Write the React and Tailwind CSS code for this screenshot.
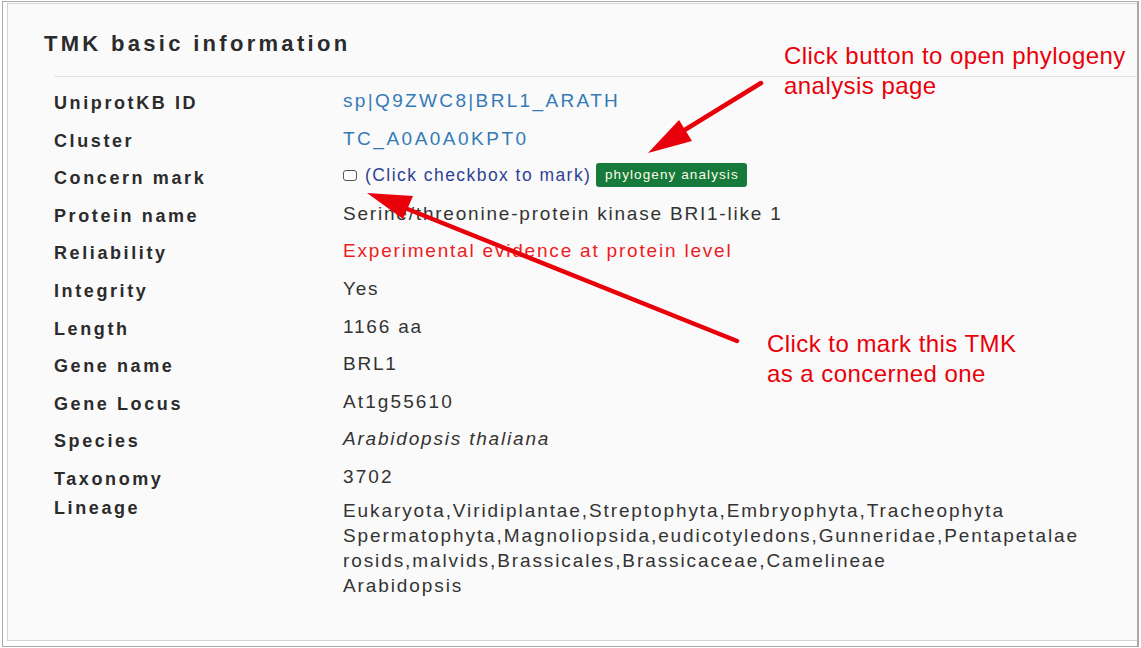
import React from "react";

const rows = [
  ["UniprotKB ID", "link", "sp|Q9ZWC8|BRL1_ARATH"],
  ["Cluster", "link2", "TC_A0A0A0KPT0"],
  ["Concern mark", "mark", ""],
  ["Protein name", "text", "Serine/threonine-protein kinase BRI1-like 1"],
  ["Reliability", "red", "Experimental evidence at protein level"],
  ["Integrity", "text", "Yes"],
  ["Length", "text", "1166 aa"],
  ["Gene name", "text", "BRL1"],
  ["Gene Locus", "num", "At1g55610"],
  ["Species", "italic", "Arabidopsis thaliana"],
  ["Taxonomy", "num", "3702"],
];

function Value({ kind, text }) {
  if (kind === "link") return <span className="tracking-[2.35px] text-[#337ab7]">{text}</span>;
  if (kind === "link2") return <span className="tracking-[2.5px] text-[#337ab7]">{text}</span>;
  if (kind === "red") return <span className="tracking-[1.8px] text-[#ee1c24]">{text}</span>;
  if (kind === "italic") return <span className="italic tracking-[1.8px]">{text}</span>;
  if (kind === "num") return <span className="tracking-[2.1px]">{text}</span>;
  if (kind === "mark")
    return (
      <span className="-mt-[2px] flex items-center">
        <span className="mr-[8px] inline-block h-[11px] w-[14px] rounded-[3px] border border-[#555] bg-white" />
        <span className="text-[17.5px] tracking-[1.45px] text-[#2f4193]">(Click checkbox to mark)</span>
        <span className="ml-[5px] flex h-[24px] w-[151px] items-center justify-center rounded-[3px] bg-[#157a3c] text-[13.5px] tracking-[1.1px] text-[#fffbe6]">
          phylogeny analysis
        </span>
      </span>
    );
  return <span className="tracking-[1.8px]">{text}</span>;
}

export default function App() {
  return (
    <div
      className="relative h-[648px] w-[1141px] overflow-hidden bg-white"
      style={{ fontFamily: '"Liberation Sans", Arial, sans-serif' }}
    >
      <div className="ml-[2px] mt-[1px] h-[646px] w-[1137px] border-l border-t border-r-2 border-b border-[#a9a9a9] pl-[4px] pt-[1px] pb-[5px]">
        <div className="h-full w-full border-l border-t border-b border-[#d4d4d4] bg-[#fafafa] pl-[36px] pt-[27px]">
          <h1 className="text-[22px] font-bold leading-[26px] tracking-[3.3px] text-[#2b2b2b]">
            TMK basic information
          </h1>
          <div className="ml-[10px] mt-[19px] border-t border-[#e3e3e3]" />
          <div className="ml-[10px] pt-[12px] text-[#333]">
            {rows.map(([label, kind, text]) => (
              <div key={label} className="flex h-[37.6px]">
                <div className="w-[289px] pt-[3px] text-[18px] font-bold leading-[22px] tracking-[2.6px] text-[#2b2b2b]">
                  {label}
                </div>
                <div className="pt-[1px] text-[19px] leading-[22px]">
                  <Value kind={kind} text={text} />
                </div>
              </div>
            ))}
            <div className="-mt-[6px] flex">
              <div className="w-[289px] text-[18px] font-bold leading-[22px] tracking-[2.6px] text-[#2b2b2b]">
                Lineage
              </div>
              <div className="pt-[1px] text-[19px] leading-[25px] tracking-[1.9px]">
                <div>Eukaryota,Viridiplantae,Streptophyta,Embryophyta,Tracheophyta</div>
                <div>Spermatophyta,Magnoliopsida,eudicotyledons,Gunneridae,Pentapetalae</div>
                <div>rosids,malvids,Brassicales,Brassicaceae,Camelineae</div>
                <div>Arabidopsis</div>
              </div>
            </div>
          </div>
        </div>
      </div>

      <div className="absolute left-[784px] top-[41px] text-[24px] leading-[30px] tracking-[0.45px] text-[#e8000b]">
        <div>Click button to open phylogeny</div>
        <div>analysis page</div>
      </div>
      <div className="absolute left-[767px] top-[329px] text-[24px] leading-[30px] tracking-[0.45px] text-[#e8000b]">
        <div>Click to mark this TMK</div>
        <div>as a concerned one</div>
      </div>

      <svg className="pointer-events-none absolute left-0 top-0" width="1141" height="648">
        <line x1="761" y1="83" x2="670" y2="139" stroke="#e8000b" strokeWidth="4.5" strokeLinecap="round" />
        <polygon points="648,153 679,120 692,141" fill="#e8000b" />
        <line x1="737" y1="341" x2="395" y2="204" stroke="#e8000b" strokeWidth="4.5" strokeLinecap="round" />
        <polygon points="367,193 413,196 403,219" fill="#e8000b" />
      </svg>
    </div>
  );
}
